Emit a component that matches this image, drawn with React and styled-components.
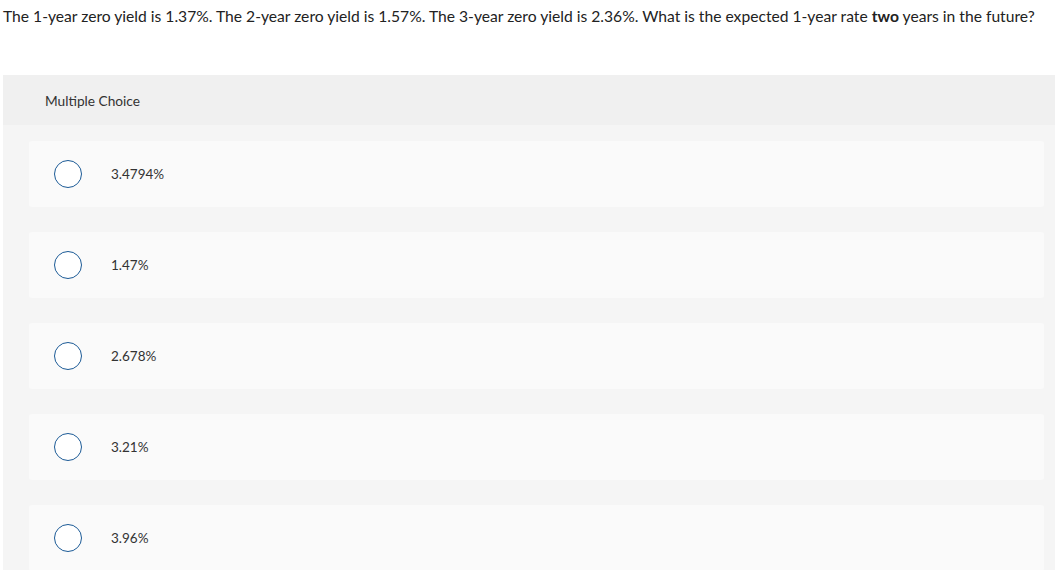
import React from 'react';
import styled, { createGlobalStyle } from 'styled-components';

const GlobalStyle = createGlobalStyle`
  body {
    margin: 0;
    background: #fff;
    font-family: 'Lato', 'Open Sans', sans-serif;
    color: #333;
  }
`;

const Page = styled.div`
  width: 1055px;
  overflow: hidden;
`;

const Question = styled.p`
  margin: 0;
  padding: 6px 3px 0;
  font-size: 15.65px;
  line-height: 20px;
  color: #222;
  white-space: nowrap;

  strong {
    font-weight: 700;
  }
`;

const Panel = styled.section`
  margin: 49px 0 0 3px;
  background: #f5f5f5;
`;

const PanelHeader = styled.div`
  height: 50px;
  display: flex;
  align-items: center;
  padding-left: 42px;
  background: #f0f0f0;
  font-size: 13.7px;
  color: #333;
`;

const Options = styled.div`
  display: flex;
  flex-direction: column;
  gap: 25px;
  padding: 16px 11px 20px 26px;
`;

const Option = styled.label`
  height: 66px;
  display: flex;
  align-items: center;
  background: #fafafa;
  border-radius: 3px;
  padding-left: 25px;
  cursor: pointer;
`;

const Radio = styled.span`
  width: 26px;
  height: 26px;
  border: 1px solid #1b5a96;
  border-radius: 50%;
  background: #fff;
  flex-shrink: 0;
`;

const OptionText = styled.span`
  margin-left: 29px;
  font-size: 13.5px;
  color: #333;
`;

const choices = ['3.4794%', '1.47%', '2.678%', '3.21%', '3.96%'];

const App = () => (
  <Page>
    <GlobalStyle />
    <Question>
      The 1-year zero yield is 1.37%. The 2-year zero yield is 1.57%. The 3-year zero yield is 2.36%. What is the expected 1-year rate <strong>two</strong> years in the future?
    </Question>
    <Panel>
      <PanelHeader>Multiple Choice</PanelHeader>
      <Options>
        {choices.map((c) => (
          <Option key={c}>
            <Radio />
            <OptionText>{c}</OptionText>
          </Option>
        ))}
      </Options>
    </Panel>
  </Page>
);

export default App;
